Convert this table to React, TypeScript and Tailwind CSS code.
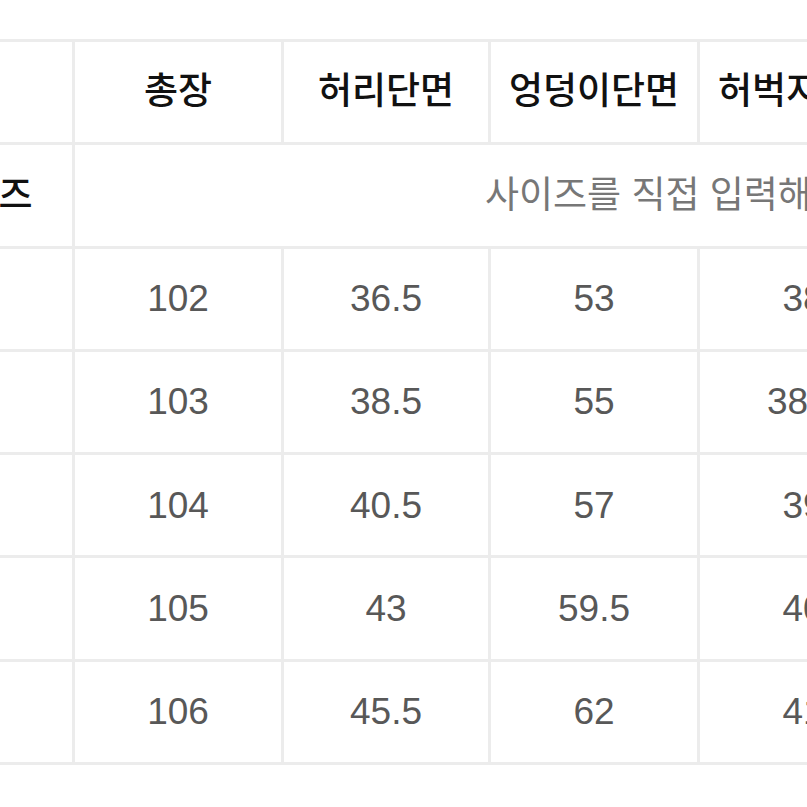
const HEADERS = ["총장", "허리단면", "엉덩이단면", "허벅지단면", "밑위", "밑단단면"];

const ROWS = [
  ["102", "36.5", "53", "38", "30", "21"],
  ["103", "38.5", "55", "38.5", "31", "22"],
  ["104", "40.5", "57", "39", "32", "23"],
  ["105", "43", "59.5", "40", "33", "24"],
  ["106", "45.5", "62", "41", "34", "25"],
];

const FONT = "font-['Liberation_Sans','Noto_Sans_CJK_KR',sans-serif]";

export default function App() {
  return (
    <div className={`h-[807px] w-[807px] overflow-hidden bg-white ${FONT}`}>
      <div className="ml-[-112px] mt-[39px] grid w-max auto-rows-[100.3px] grid-cols-[181px_206px_204px_206px_206px_206px_206px] gap-[3px] bg-[#ececec] p-[3px]">
        <div className="bg-white" />
        {HEADERS.map((h) => (
          <div
            key={h}
            className="flex items-center justify-center bg-white text-[37px] font-medium text-[#111]"
          >
            {h}
          </div>
        ))}

        <div className="flex items-center justify-center bg-white text-[37px] font-medium text-[#111]">
          사이즈
        </div>
        <div className="col-span-6 flex items-center justify-center bg-white text-[37px] text-[#777]">
          사이즈를 직접 입력해주세요
        </div>

        {ROWS.map((row, i) => (
          <div key={i} className="contents">
            <div className="bg-white" />
            {row.map((v, j) => (
              <div
                key={j}
                className="flex items-center justify-center bg-white text-[37px] text-[#585858]"
              >
                {v}
              </div>
            ))}
          </div>
        ))}
      </div>
    </div>
  );
}
